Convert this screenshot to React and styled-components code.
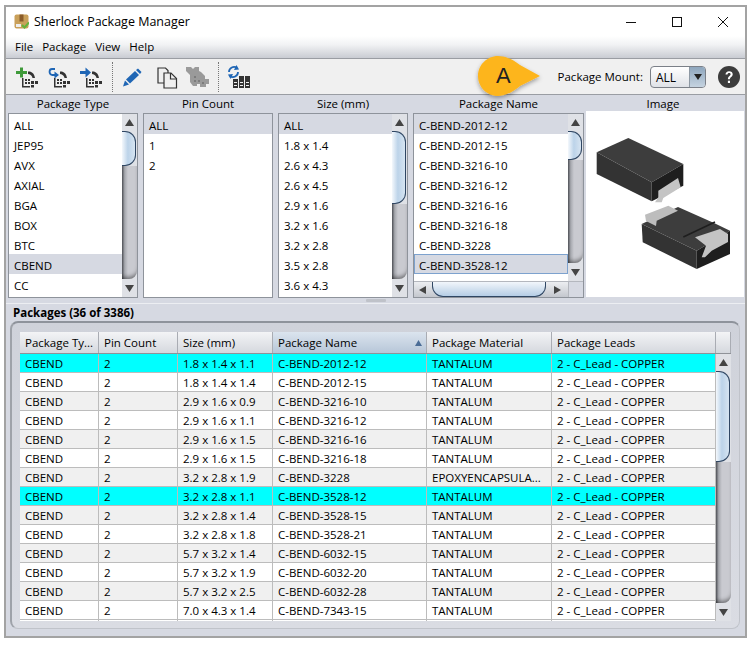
import React from 'react';
import styled, { createGlobalStyle } from 'styled-components';

const GlobalStyle = createGlobalStyle`
  html, body { margin: 0; padding: 0; background: #fff; }
  body { font-family: "Open Sans", "Noto Sans", sans-serif; font-size: 11.5px; color: #000; }
  * { box-sizing: border-box; }
`;

const Page = styled.div`
  width: 755px;
  height: 645px;
  padding: 5px 8px 7px 4px;
`;

const Window = styled.div`
  position: relative;
  width: 743px;
  height: 633px;
  border: 2px solid #a3a3a3;
  display: flex;
  flex-direction: column;
  background: #d6d9e2;
`;

const TitleBar = styled.div`
  height: 29px;
  background: #fff;
  display: flex;
  align-items: center;
  padding-left: 8px;
  gap: 5px;
  flex-shrink: 0;
`;

const TitleText = styled.span`
  font-size: 12.5px;
  flex: 1;
`;

const WindowButtons = styled.div`
  display: flex;
  align-items: center;
  margin-right: -1px;
`;

const WindowButton = styled.div`
  width: 46px;
  height: 29px;
  display: flex;
  align-items: center;
  justify-content: center;
`;

const MenuBar = styled.div`
  height: 22px;
  background: linear-gradient(#ffffff 0%, #f1f2f4 40%, #c9ccd3 100%);
  display: flex;
  align-items: center;
  padding: 0 0 1px 9px;
  gap: 9px;
  flex-shrink: 0;
`;

const MenuItem = styled.span`
  font-size: 11.5px;
`;

const Toolbar = styled.div`
  height: 37px;
  background: #f0f0f0;
  border-top: 1px solid #9a9da3;
  border-bottom: 1px solid #9a9da3;
  display: flex;
  align-items: center;
  padding-left: 10px;
  flex-shrink: 0;
`;

const ToolIcon = styled.svg`
  width: ${(p) => p.$w || 24}px;
  height: 24px;
  display: block;
  margin-right: ${(p) => p.$gap || 0}px;
`;

const ToolSep = styled.div`
  width: 1px;
  height: 30px;
  border-left: 1px dotted #777;
  margin-right: ${(p) => p.$gap}px;
`;

const MountArea = styled.div`
  margin-left: auto;
  display: flex;
  align-items: center;
  padding-right: 5px;
`;

const MountLabel = styled.span`
  font-size: 11.5px;
  margin-right: 7px;
`;

const MountSelect = styled.div`
  width: 56px;
  height: 22px;
  border: 1px solid #7b8088;
  border-radius: 4px;
  background: linear-gradient(#ffffff, #dfe2e7);
  display: flex;
  overflow: hidden;
  margin-right: 12px;
`;

const MountValue = styled.span`
  flex: 1;
  font-size: 12px;
  padding-left: 5px;
  line-height: 22px;
`;

const MountArrow = styled.div`
  width: 16px;
  background: linear-gradient(#8ea6bd, #c5d3e0);
  border-left: 1px solid #8d98a3;
  display: flex;
  align-items: center;
  justify-content: center;
`;

const Callout = styled.svg`
  position: absolute;
  left: 464px;
  top: 40px;
  width: 80px;
  height: 56px;
`;

const CalloutLetter = styled.span`
  position: absolute;
  left: 490px;
  top: 54px;
  font-family: "Liberation Sans", sans-serif;
  font-size: 22px;
  line-height: 30px;
  color: #222;
`;

const Filters = styled.div`
  display: grid;
  grid-template-columns: 130px 130px 130px 171px 155px;
  column-gap: 5px;
  padding-left: 2px;
  height: 203px;
  flex-shrink: 0;
`;

const FilterColumn = styled.div`
  display: flex;
  flex-direction: column;
  min-width: 0;
  margin-left: ${(p) => p.$shift || 0}px;
`;

const ColumnTitle = styled.div`
  height: 18px;
  line-height: 18px;
  text-align: center;
  font-size: 11.5px;
  flex-shrink: 0;
  padding-right: ${(p) => p.$inset || 0}px;
`;

const ListBox = styled.div`
  flex: 1;
  height: 184px;
  border: 1px solid #8e939b;
  background: #fff;
  display: flex;
  overflow: hidden;
`;

const ListBody = styled.div`
  flex: 1;
  min-width: 0;
  display: flex;
  flex-direction: column;
`;

const ListItems = styled.div`
  flex: 1;
  overflow: hidden;
`;

const ListItem = styled.div`
  height: 20px;
  line-height: 24px;
  padding-left: 5px;
  font-size: 11.5px;
  white-space: nowrap;
  background: ${(p) => (p.$selected ? '#d6d9e2' : '#fff')};
  box-shadow: ${(p) => (p.$focused ? 'inset 0 0 0 1px #7da2ce' : 'none')};
`;

const VTrack = styled.div`
  width: 15px;
  flex-shrink: 0;
  display: flex;
  flex-direction: column;
  background: #dfe1e6;
`;

const ArrowButton = styled.div`
  height: ${(p) => p.$h}px;
  width: ${(p) => (p.$w ? `${p.$w}px` : 'auto')};
  flex-shrink: 0;
  display: flex;
  align-items: center;
  justify-content: center;
`;

const VThumb = styled.div`
  height: ${(p) => p.$h}px;
  flex-shrink: 0;
  margin-right: 1px;
  border: 1px solid #2f4663;
  border-left: none;
  border-radius: 0 11px 11px 0;
  background: linear-gradient(90deg, #f4f8fc, #bcd3e9 45%, #d6e4f1);
`;

const VRest = styled.div`
  flex: 1;
  background: linear-gradient(90deg, #54565c 0, #a6a8ae 18%, #c9cad0 40%);
  border-radius: 0 0 8px 0;
  box-shadow: inset 0 -4px 4px -2px rgba(0, 0, 0, 0.45);
`;

const HBar = styled.div`
  height: 16px;
  flex-shrink: 0;
  display: flex;
  align-items: center;
  background: linear-gradient(#eceef1, #c4c7ce);
  border-top: 1px solid #b4b7be;
`;

const HThumb = styled.div`
  width: 115px;
  height: 15px;
  margin-left: 2px;
  border: 1px solid #2f4663;
  border-top: none;
  border-radius: 0 0 11px 11px;
  background: linear-gradient(#f2f6fb, #b5cde5);
`;

const Corner = styled.div`
  height: 16px;
  flex-shrink: 0;
  background: #d6d9e2;
  border-top: 1px solid #b4b7be;
  border-left: 1px solid #b4b7be;
`;

const ImagePane = styled.div`
  margin-top: -2px;
  height: 186px;
  background: #fff;
`;

const Splitter = styled.div`
  height: 6px;
  flex-shrink: 0;
  display: flex;
  justify-content: center;
  border-bottom: 1px solid #eceef2;
`;

const Grip = styled.div`
  width: 20px;
  height: 3px;
  margin-top: 1px;
  background: #bfc2c9;
  border-radius: 1px;
`;

const SectionTitle = styled.div`
  height: 17px;
  line-height: 18px;
  padding-left: 7px;
  font-weight: 700;
  font-size: 11.5px;
  flex-shrink: 0;
`;

const TablePanel = styled.div`
  flex: 1;
  margin: 0 5px 7px 4px;
  padding: 9px 8px 0 8px;
  border: 1px solid #c0c3ca;
  border-top: 2px solid #8e939b;
  border-left: 2px solid #9ea2a9;
  border-radius: 8px;
  background: linear-gradient(#cfd2da, #dadce3);
  display: flex;
  flex-direction: column;
  min-height: 0;
`;

const TableFrame = styled.div`
  width: 711px;
  height: 289px;
  display: flex;
  flex-direction: column;
  overflow: hidden;
  background: #fff;
`;

const COLUMNS = '79px 79px 95px 154px 125px 164px';

const HeaderRow = styled.div`
  display: grid;
  grid-template-columns: ${COLUMNS} 15px;
  height: 22px;
  flex-shrink: 0;
  background: linear-gradient(#f3f4f6, #d5d8de);
  border-bottom: 1px solid #8f9298;
`;

const HeaderCell = styled.div`
  padding: 0 4px 0 5px;
  line-height: 21px;
  font-size: 11.5px;
  white-space: nowrap;
  border-right: 1px solid #a9acb3;
  background: ${(p) => (p.$sorted ? 'linear-gradient(#dbe4ee, #b7c6d8)' : 'transparent')};
  display: flex;
  align-items: center;
  justify-content: space-between;
`;

const TableBody = styled.div`
  flex: 1;
  display: flex;
  min-height: 0;
`;

const Rows = styled.div`
  flex: 1;
  min-width: 0;
  overflow: hidden;
`;

const Row = styled.div`
  display: grid;
  grid-template-columns: ${COLUMNS};
  height: 19px;
  background: ${(p) => (p.$hit ? '#00ffff' : p.$alt ? '#f0f0f0' : '#fff')};
  border-bottom: 1px solid #bcbcbc;
`;

const Cell = styled.div`
  padding-left: 5px;
  line-height: 20px;
  font-size: 11.5px;
  white-space: nowrap;
  overflow: hidden;
  border-right: 1px solid #bcbcbc;
`;

const pkgTypes = ['ALL', 'JEP95', 'AVX', 'AXIAL', 'BGA', 'BOX', 'BTC', 'CBEND', 'CC'];
const pinCounts = ['ALL', '1', '2'];
const sizes = ['ALL', '1.8 x 1.4', '2.6 x 4.3', '2.6 x 4.5', '2.9 x 1.6', '3.2 x 1.6', '3.2 x 2.8', '3.5 x 2.8', '3.6 x 4.3'];
const pkgNames = ['C-BEND-2012-12', 'C-BEND-2012-15', 'C-BEND-3216-10', 'C-BEND-3216-12', 'C-BEND-3216-16', 'C-BEND-3216-18', 'C-BEND-3228', 'C-BEND-3528-12'];

const rows = [
  ['1.8 x 1.4 x 1.1', 'C-BEND-2012-12'],
  ['1.8 x 1.4 x 1.4', 'C-BEND-2012-15'],
  ['2.9 x 1.6 x 0.9', 'C-BEND-3216-10'],
  ['2.9 x 1.6 x 1.1', 'C-BEND-3216-12'],
  ['2.9 x 1.6 x 1.5', 'C-BEND-3216-16'],
  ['2.9 x 1.6 x 1.5', 'C-BEND-3216-18'],
  ['3.2 x 2.8 x 1.9', 'C-BEND-3228', 'EPOXYENCAPSULA...'],
  ['3.2 x 2.8 x 1.1', 'C-BEND-3528-12'],
  ['3.2 x 2.8 x 1.4', 'C-BEND-3528-15'],
  ['3.2 x 2.8 x 1.8', 'C-BEND-3528-21'],
  ['5.7 x 3.2 x 1.4', 'C-BEND-6032-15'],
  ['5.7 x 3.2 x 1.9', 'C-BEND-6032-20'],
  ['5.7 x 3.2 x 2.5', 'C-BEND-6032-28'],
  ['7.0 x 4.3 x 1.4', 'C-BEND-7343-15'],
];

const Up = () => (
  <svg width="9" height="7" viewBox="0 0 9 7"><path d="M4.5 0 L9 7 H0 Z" fill="#444" /></svg>
);
const Down = () => (
  <svg width="9" height="7" viewBox="0 0 9 7"><path d="M0 0 H9 L4.5 7 Z" fill="#444" /></svg>
);
const Left = () => (
  <svg width="7" height="8" viewBox="0 0 7 8"><path d="M0 4 L7 0 V8 Z" fill="#444" /></svg>
);
const Right = () => (
  <svg width="7" height="8" viewBox="0 0 7 8"><path d="M7 4 L0 0 V8 Z" fill="#444" /></svg>
);

// small dotted footprint used by the first three toolbar buttons
const Footprint = () => (
  <g fill="#333">
    <path d="M6 13h1.500v9H6z M6 21h8v1.500H6z" />
    <path d="M9 14h2v2H9z M12 14h2v2h-2z M9 17h2v2H9z M12 17h2v2h-2z" />
    <path d="M15 16h3v3h-3z M19 16h3v3h-3z M15 20h3v2.500h-3z" />
    <path d="M12 6.500h2c3 1 4.500 3 5 6.500h-2.500c-.5-2-1.500-3.500-4.500-4z" />
  </g>
);

const ScrollV = ({ thumb }) => (
  <VTrack>
    <ArrowButton $h={17}><Up /></ArrowButton>
    <VThumb $h={thumb} />
    <VRest />
    <ArrowButton $h={18}><Down /></ArrowButton>
  </VTrack>
);

const App = () => (
  <>
    <GlobalStyle />
    <Page>
      <Window>
        <TitleBar>
          <svg width="15" height="15" viewBox="0 0 15 15">
            <rect x="0.5" y="0.5" width="14" height="14" rx="2" fill="#c9a05a" />
            <rect x="5.5" y="0.5" width="4" height="7" fill="#8a5c2a" />
            <rect x="2" y="10" width="5" height="3" fill="#eee" />
            <path d="M8 11 L10.5 13.5 L15 8.5" stroke="#63b33a" strokeWidth="2" fill="none" />
          </svg>
          <TitleText>Sherlock Package Manager</TitleText>
          <WindowButtons>
            <WindowButton>
              <svg width="10" height="10" viewBox="0 0 10 10"><path d="M0 5.5H10" stroke="#111" /></svg>
            </WindowButton>
            <WindowButton>
              <svg width="10" height="10" viewBox="0 0 10 10"><rect x="0.5" y="0.5" width="9" height="9" fill="none" stroke="#111" /></svg>
            </WindowButton>
            <WindowButton>
              <svg width="10" height="10" viewBox="0 0 10 10"><path d="M0 0L10 10M10 0L0 10" stroke="#111" /></svg>
            </WindowButton>
          </WindowButtons>
        </TitleBar>

        <MenuBar>
          <MenuItem>File</MenuItem>
          <MenuItem>Package</MenuItem>
          <MenuItem>View</MenuItem>
          <MenuItem>Help</MenuItem>
        </MenuBar>

        <Toolbar>
          <ToolIcon $gap={8} viewBox="0 0 24 24">
            <path d="M0 6h4V2.500h3V6h4v3H7v3.500H4V9H0z" fill="#3f9a3a" />
            <Footprint />
          </ToolIcon>
          <ToolIcon $gap={8} viewBox="0 0 24 24">
            <path d="M7 4H4C1 4 .5 9 4 10h4" fill="none" stroke="#1f66b5" strokeWidth="1.800" />
            <path d="M6.500 6.500l4.500 3.500-4.500 3.500z" fill="#1f66b5" />
            <Footprint />
          </ToolIcon>
          <ToolIcon $gap={8} viewBox="0 0 24 24">
            <path d="M0 6h5.500V2.500L11 7.500l-5.500 5V9H0z" fill="#1f66b5" />
            <Footprint />
          </ToolIcon>
          <ToolSep $gap={10} />
          <ToolIcon $gap={10} viewBox="0 0 24 24">
            <path d="M0 21.500 L2 15.500 L6 19.500 Z" fill="#1f66b5" />
            <path d="M3 14.500 L12 6 L16 10 L7 18.500 Z" fill="#1f66b5" />
            <path d="M13 5 L15 3.500 L18.500 7 L17 9 Z" fill="#1f66b5" />
          </ToolIcon>
          <ToolIcon $gap={4} viewBox="0 0 24 24">
            <path d="M1 3h7.500l2.500 2.500V18H1z" fill="#f0f0f0" stroke="#333" strokeWidth="1.200" />
            <path d="M7 8h7l5.500 5.500V23H7z" fill="#f0f0f0" stroke="#333" strokeWidth="1.200" />
            <path d="M13.500 8v6h6" fill="none" stroke="#333" strokeWidth="1.200" />
          </ToolIcon>
          <ToolIcon $gap={9} viewBox="0 0 24 24">
            <path d="M1 2h5l2 2 2-2h4v4l2 1 4 4v3h4v5h-3v3h-6v-3h-3v2H8l-3-4v-7L3 8 1 6z" fill="#9a9a9a" />
            <path d="M9 11h2v2H9z M13 15h2v2h-2z M9 15h2v2H9z M17 17h2v2h-2z" fill="#7c7c7c" />
          </ToolIcon>
          <ToolSep $gap={9} />
          <ToolIcon $w={22} viewBox="0 0 22 24">
            <path d="M1 7a5 5 0 0 1 8-4" fill="none" stroke="#1f66b5" strokeWidth="1.800" />
            <path d="M8.500 0l2.500 4.500-5 .5z" fill="#1f66b5" />
            <path d="M10 7a5 5 0 0 1-8 4" fill="none" stroke="#1f66b5" strokeWidth="1.800" />
            <path d="M2.500 14l-2.500-4.500 5-.5z" fill="#1f66b5" />
            <path d="M5 14h5v9H5z M11 11h5v12h-5z M17 11h5v12h-5z" fill="#333" />
            <path d="M6 17h3v1H6z M6 20h3v1H6z M12 17h3v1h-3z M12 20h3v1h-3z M18 17h3v1h-3z M18 20h3v1h-3z" fill="#f0f0f0" />
          </ToolIcon>
          <MountArea>
            <MountLabel>Package Mount:</MountLabel>
            <MountSelect>
              <MountValue>ALL</MountValue>
              <MountArrow>
                <svg width="8" height="6" viewBox="0 0 8 6"><path d="M0 0H8L4 6Z" fill="#222" /></svg>
              </MountArrow>
            </MountSelect>
            <svg width="22" height="22" viewBox="0 0 22 22">
              <circle cx="11" cy="11" r="11" fill="#3c3c3c" />
              <path d="M7.500 8.500c0-2 1.500-3.300 3.600-3.300 2.200 0 3.600 1.300 3.600 3 0 2.700-2.800 2.700-2.800 5h-2c0-3.200 2.700-3.300 2.700-5 0-.7-.6-1.200-1.500-1.200-1 0-1.600.6-1.600 1.500z" fill="#fff" />
              <rect x="9.900" y="14.700" width="2.100" height="2.300" fill="#fff" />
            </svg>
          </MountArea>
        </Toolbar>

        <Callout viewBox="0 0 80 56">
          <defs>
            <filter id="calloutShadow" x="-20%" y="-20%" width="140%" height="150%">
              <feDropShadow dx="0" dy="2" stdDeviation="2" floodColor="#000" floodOpacity="0.35" />
            </filter>
          </defs>
          <path d="M28 9 C36 9 44 13 50 18 L70 29 L50 39 C44 44 36 49 28 49 C17 49 8 40 8 29 C8 18 17 9 28 9 Z" fill="#fdb51e" filter="url(#calloutShadow)" />
        </Callout>
        <CalloutLetter>A</CalloutLetter>

        <Filters>
          <FilterColumn>
            <ColumnTitle>Package Type</ColumnTitle>
            <ListBox>
              <ListBody>
                <ListItems>
                  {pkgTypes.map((t) => <ListItem key={t} $selected={t === 'CBEND'}>{t}</ListItem>)}
                </ListItems>
              </ListBody>
              <ScrollV thumb={35} />
            </ListBox>
          </FilterColumn>

          <FilterColumn>
            <ColumnTitle>Pin Count</ColumnTitle>
            <ListBox>
              <ListBody>
                <ListItems>
                  {pinCounts.map((t) => <ListItem key={t} $selected={t === 'ALL'}>{t}</ListItem>)}
                </ListItems>
              </ListBody>
            </ListBox>
          </FilterColumn>

          <FilterColumn>
            <ColumnTitle>Size (mm)</ColumnTitle>
            <ListBox>
              <ListBody>
                <ListItems>
                  {sizes.map((t) => <ListItem key={t} $selected={t === 'ALL'}>{t}</ListItem>)}
                </ListItems>
              </ListBody>
              <ScrollV thumb={73} />
            </ListBox>
          </FilterColumn>

          <FilterColumn>
            <ColumnTitle>Package Name</ColumnTitle>
            <ListBox>
              <ListBody>
                <ListItems>
                  {pkgNames.map((t, i) => (
                    <ListItem key={t} $selected={i === 0 || i === 7} $focused={i === 7}>{t}</ListItem>
                  ))}
                </ListItems>
                <HBar>
                  <ArrowButton $h={14} $w={16}><Left /></ArrowButton>
                  <HThumb />
                  <ArrowButton $h={14} $w={22}><Right /></ArrowButton>
                </HBar>
              </ListBody>
              <VTrack>
                <ArrowButton $h={17}><Up /></ArrowButton>
                <VThumb $h={29} />
                <VRest />
                <ArrowButton $h={18}><Down /></ArrowButton>
                <Corner />
              </VTrack>
            </ListBox>
          </FilterColumn>

          <FilterColumn $shift={-3}>
            <ColumnTitle $inset={4}>Image</ColumnTitle>
            <ImagePane>
              <svg width="155" height="186" viewBox="0 0 155 186">
                {/* upper part */}
                <path d="M10.700 41.300 L42.300 27 L97.300 53 L65.700 71.300 Z" fill="#3d3d3d" />
                <path d="M10.700 41.300 L65.700 71.300 L65.700 90.300 L10.700 63 Z" fill="#333" />
                <path d="M65.700 71.300 L97.300 53 L97.300 74.700 L65.700 90.300 Z" fill="#1e1e1e" />
                <path d="M72.300 79.700 L92 67 L94.700 76.300 L77.300 87 L75.700 91.300 L69 91.300 L72.300 86.300 Z" fill="#c4c4c4" />
                {/* lower part */}
                <path d="M55.700 113 L92 96 L128 112 L144 119.700 L110.700 139.700 Z" fill="#3d3d3d" />
                <path d="M55.700 113 L110.700 139.700 L110.700 158 L56.700 131.300 Z" fill="#333" />
                <path d="M110.700 139.700 L144 119.700 L144 143 L110.700 158 Z" fill="#1e1e1e" />
                <path d="M59 103.700 L82.300 94.700 L92 99.700 L70.700 109.700 L70 115 L60 110 Z" fill="#bdbdbd" />
                <path d="M97.300 126 L129 111" stroke="#1e1e1e" strokeWidth="1.500" />
                <path d="M109 126.300 L134 118 L142 123 L142 131 L125.700 139.700 L119 146.300 L115.700 146.300 L120 134.700 Z" fill="#c4c4c4" />
              </svg>
            </ImagePane>
          </FilterColumn>
        </Filters>

        <Splitter><Grip /></Splitter>
        <SectionTitle>Packages (36 of 3386)</SectionTitle>

        <TablePanel>
          <TableFrame>
            <HeaderRow>
              <HeaderCell>Package Ty...</HeaderCell>
              <HeaderCell>Pin Count</HeaderCell>
              <HeaderCell>Size (mm)</HeaderCell>
              <HeaderCell $sorted>
                Package Name
                <svg width="7" height="6" viewBox="0 0 7 6"><path d="M3.500 0L7 6H0Z" fill="#4a6c96" /></svg>
              </HeaderCell>
              <HeaderCell>Package Material</HeaderCell>
              <HeaderCell>Package Leads</HeaderCell>
              <HeaderCell />
            </HeaderRow>
            <TableBody>
              <Rows>
                {rows.map(([size, name, material], i) => (
                  <Row key={name} $hit={i === 0 || i === 7} $alt={i % 2 === 0}>
                    <Cell>CBEND</Cell>
                    <Cell>2</Cell>
                    <Cell>{size}</Cell>
                    <Cell>{name}</Cell>
                    <Cell>{material || 'TANTALUM'}</Cell>
                    <Cell>2 - C_Lead - COPPER</Cell>
                  </Row>
                ))}
                <Row>
                  <Cell /><Cell /><Cell /><Cell /><Cell /><Cell />
                </Row>
              </Rows>
              <ScrollV thumb={91} />
            </TableBody>
          </TableFrame>
        </TablePanel>
      </Window>
    </Page>
  </>
);

export default App;
